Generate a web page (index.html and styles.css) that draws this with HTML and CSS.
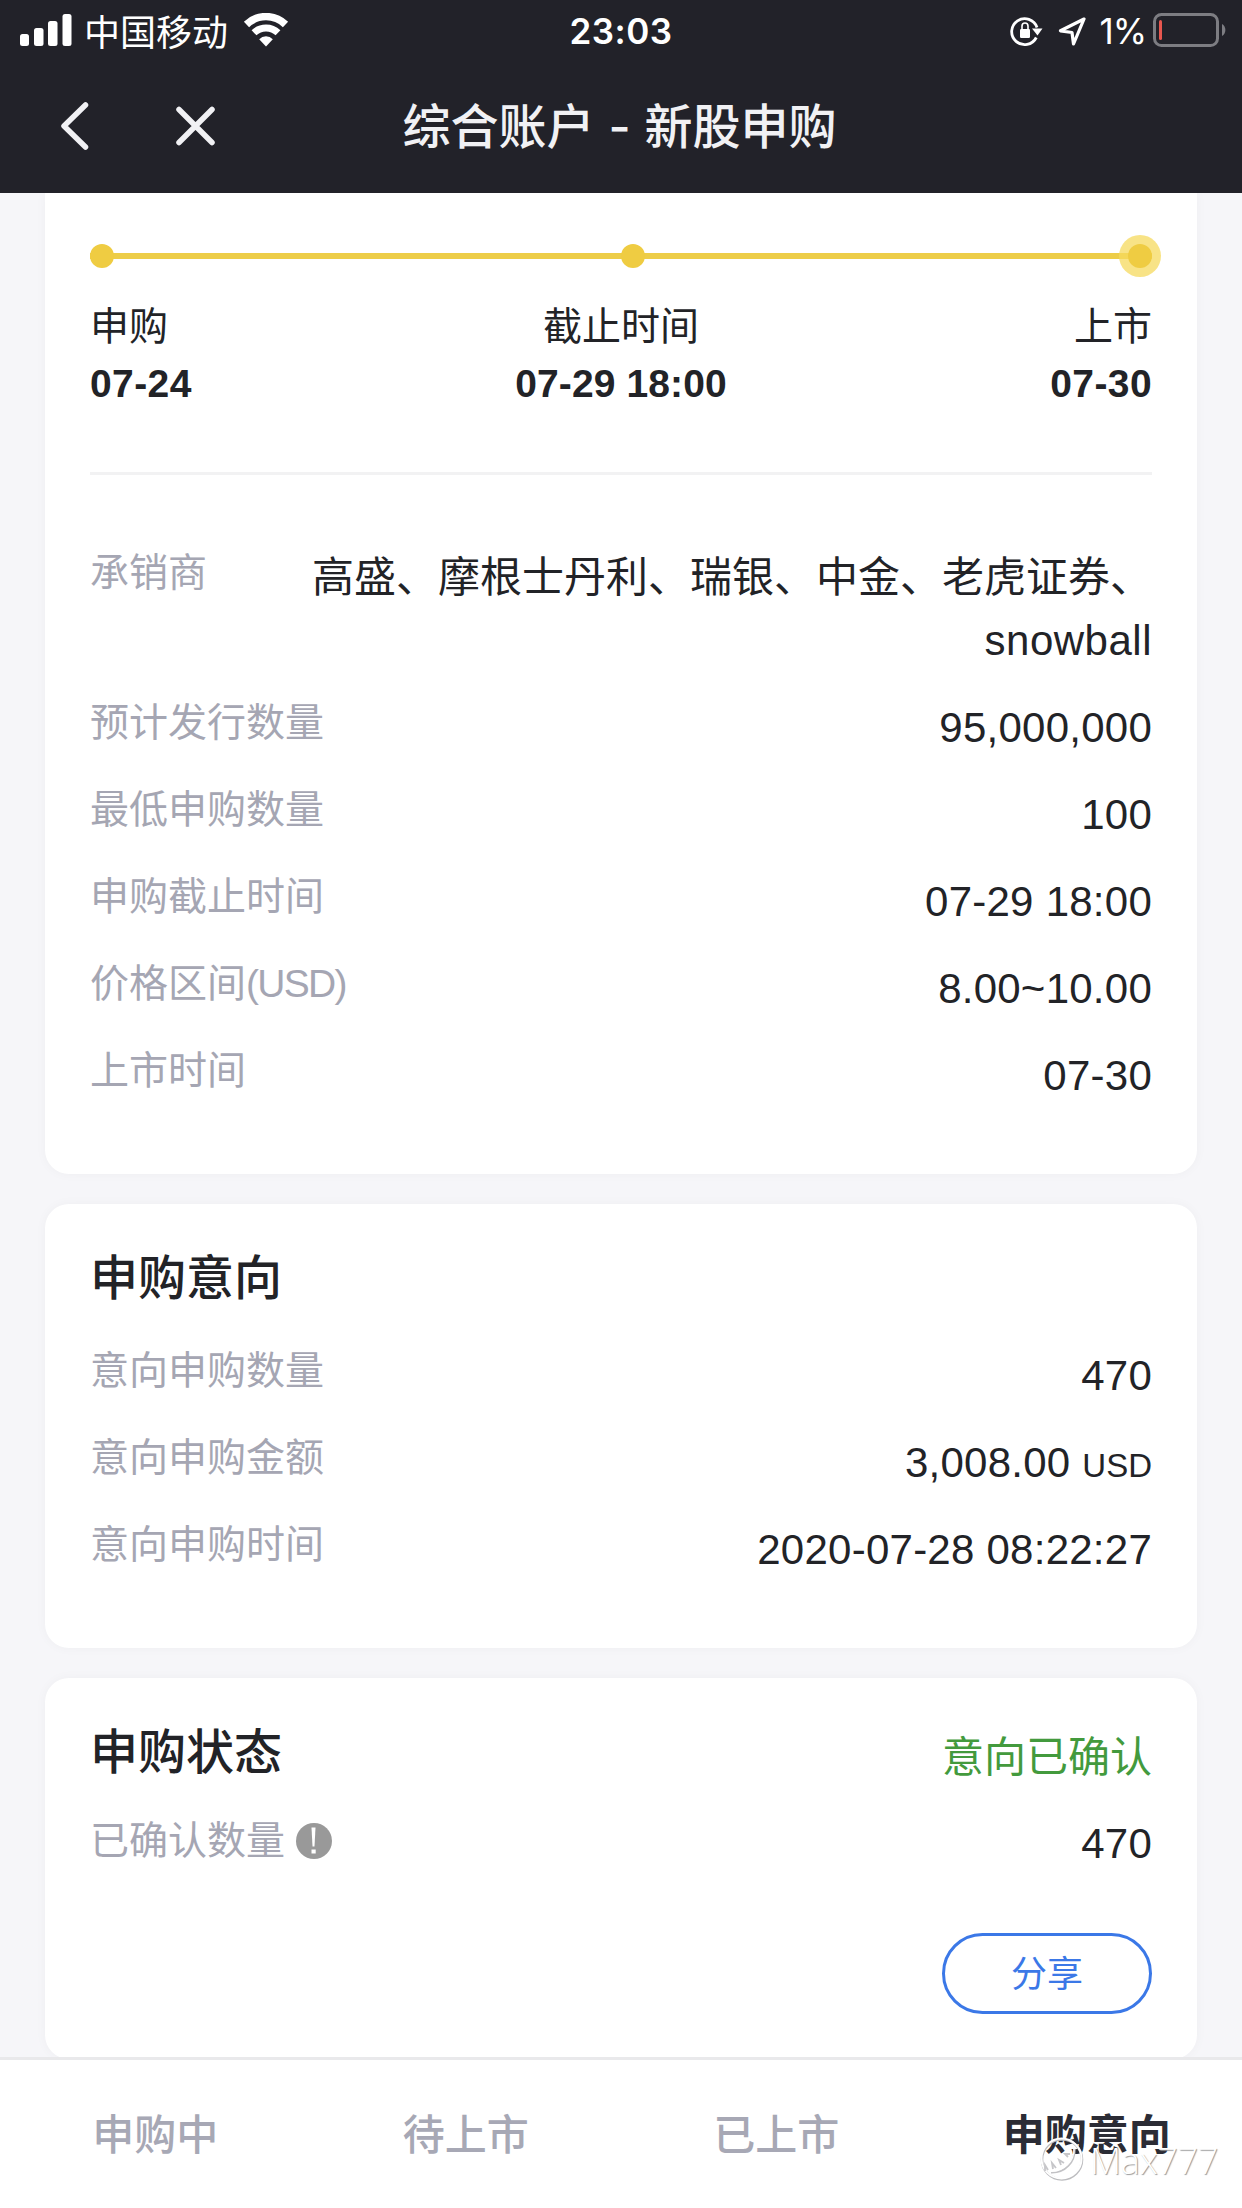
FILE: index.html
```html
<!DOCTYPE html>
<html lang="zh-CN">
<head>
<meta charset="utf-8">
<title>综合账户 - 新股申购</title>
<link rel="stylesheet" href="styles.css">
</head>
<body>
<div class="screen">
  <header class="header">
    <div class="status">
      <div class="status-left">
        <svg class="signal" width="52" height="32" viewBox="0 0 52 32" fill="#fff"><rect x="0" y="20" width="9" height="12" rx="2.5"/><rect x="14" y="14" width="9.500" height="18" rx="2.500"/><rect x="28" y="7" width="9.500" height="25" rx="2.500"/><rect x="42.500" y="0" width="9" height="32" rx="2.500"/></svg>
        <span class="carrier">中国移动</span>
        <svg class="wifi" width="46" height="34" viewBox="0 0 46 34"><path d="M3.500 11.500a28 28 0 0 1 39 0" fill="none" stroke="#fff" stroke-width="7.500"/><path d="M11 19.800a17.500 17.500 0 0 1 24 0" fill="none" stroke="#fff" stroke-width="7"/><path d="M23 33.500l-6.800-7.300a9.500 9.500 0 0 1 13.600 0z" fill="#fff"/></svg>
      </div>
      <div class="clock">23:03</div>
      <div class="status-right">
        <svg class="lock" width="33" height="32" viewBox="0 0 33 32"><path d="M26.300 22.500A13 13 0 1 1 27 12.500" fill="none" stroke="#fff" stroke-width="2.800"/><path d="M22 13.500h10.500l-5 7z" fill="#fff"/><rect x="10" y="14" width="10" height="9" rx="1.200" fill="#fff"/><path d="M12 15v-4a3 3 0 0 1 6 0v4" fill="none" stroke="#fff" stroke-width="1.600"/></svg>
        <svg class="nav-arrow" width="28" height="30" viewBox="0 0 28 30"><path d="M26 3 2.500 14.800l11.500 1.700 1.500 11.500z" fill="none" stroke="#fff" stroke-width="3.200" stroke-linejoin="round"/></svg>
        <span class="percent">1%</span>
        <svg class="battery" width="74" height="34" viewBox="0 0 74 34"><rect x="1.500" y="1.500" width="63" height="31" rx="7" fill="none" stroke="#7d7d82" stroke-width="3"/><rect x="6" y="7" width="3" height="20" rx="1.500" fill="#e8574f"/><path d="M69 11a7 7 0 0 1 0 12z" fill="#7d7d82"/></svg>
      </div>
    </div>
    <div class="titlebar">
      <div class="nav-buttons">
        <svg class="back" width="29" height="54" viewBox="0 0 29 54"><path d="M25.500 6 4 27l21.500 21" fill="none" stroke="#f1f1f4" stroke-width="5.500" stroke-linecap="round" stroke-linejoin="round"/></svg>
        <svg class="close" width="39" height="40" viewBox="0 0 39 40"><path d="M3 3.500 36 36.500M36 3.500 3 36.500" fill="none" stroke="#f1f1f4" stroke-width="5.500" stroke-linecap="round"/></svg>
      </div>
      <h1 class="title">综合账户 <span class="dash">-</span> 新股申购</h1>
    </div>
  </header>

  <main class="content">
    <section class="card card-detail">
      <div class="timeline"><i class="dot"></i><i class="dot dot-mid"></i><i class="dot dot-end"></i></div>
      <div class="stages">
        <div class="stage"><span>申购</span><b>07-24</b></div>
        <div class="stage stage-mid"><span>截止时间</span><b>07-29 18:00</b></div>
        <div class="stage stage-end"><span>上市</span><b>07-30</b></div>
      </div>
      <dl class="rows">
        <div class="row"><dt>承销商</dt><dd class="names">高盛、摩根士丹利、瑞银、中金、老虎证券、<br><span class="latin">snowball</span></dd></div>
        <div class="row"><dt>预计发行数量</dt><dd>95,000,000</dd></div>
        <div class="row"><dt>最低申购数量</dt><dd>100</dd></div>
        <div class="row"><dt>申购截止时间</dt><dd>07-29 18:00</dd></div>
        <div class="row"><dt>价格区间<span class="unit">(USD)</span></dt><dd>8.00~10.00</dd></div>
        <div class="row"><dt>上市时间</dt><dd>07-30</dd></div>
      </dl>
    </section>

    <section class="card card-intent">
      <h2 class="heading">申购意向</h2>
      <dl class="rows">
        <div class="row"><dt>意向申购数量</dt><dd>470</dd></div>
        <div class="row"><dt>意向申购金额</dt><dd>3,008.00 <small>USD</small></dd></div>
        <div class="row"><dt>意向申购时间</dt><dd>2020-07-28 08:22:27</dd></div>
      </dl>
    </section>

    <section class="card card-state">
      <div class="state-head"><h2 class="heading">申购状态</h2><span class="confirmed">意向已确认</span></div>
      <dl class="rows">
        <div class="row"><dt>已确认数量<svg class="info" width="36" height="36" viewBox="0 0 36 36"><circle cx="18" cy="18" r="18" fill="#999"/><path d="M15.500 4.500h4l-1 19h-2z" fill="#fff"/><rect x="15.500" y="26.500" width="4.200" height="4" fill="#fff"/></svg></dt><dd>470</dd></div>
      </dl>
      <button class="share" type="button">分享</button>
    </section>
  </main>

  <nav class="tabs">
    <a class="tab">申购中</a>
    <a class="tab">待上市</a>
    <a class="tab">已上市</a>
    <a class="tab tab-active">申购意向</a>
  </nav>

  <div class="watermark">
    <svg width="44" height="44" viewBox="0 0 44 44" fill="none"><circle cx="22" cy="22.500" r="20" stroke="#bcbcbf" stroke-width="2.600"/><circle cx="21.500" cy="21.500" r="20" stroke="#fff" stroke-width="2"/><path d="M34.500 12C35 25 25 36 11 35.500" stroke="#c2c2c5" stroke-width="2.200"/><path d="M34 11.500C34.500 24 24 35 10.500 34.500" stroke="#fff" stroke-width="1.200"/><path d="M5 34v-6l3 5M13 32l-1-6 4 5M21 28l-2-5 5 3M28 20l-3-3 5 0" stroke="#c6c6c9" stroke-width="1.800"/></svg>
    <span>Max777</span>
  </div>
</div>
</body>
</html>
```
FILE: styles.css
```css
* { box-sizing: border-box; }
body {
  margin: 0;
  background: #f6f6f9;
  color: #222327;
  font-family: "Liberation Sans", "Noto Sans CJK SC", sans-serif;
}
h1, h2, dl, dd { margin: 0; }
svg { display: block; flex: none; }

.screen {
  position: relative;
  width: 1242px;
  height: 2208px;
  display: flex;
  flex-direction: column;
  overflow: hidden;
}

/* status bar and title */
.header { flex: none; height: 193px; background: #222229; color: #fff; }
.status {
  height: 60px;
  padding: 0 15px 0 20px;
  display: grid;
  grid-template-columns: 1fr auto 1fr;
  align-items: center;
}
.status-left, .status-right { display: flex; align-items: center; }
.status-right { justify-content: flex-end; }
.carrier { margin-left: 12px; font-size: 36px; line-height: 60px; font-family: "Noto Sans CJK SC", sans-serif; }
.wifi { margin: 0 0 1px 15px; }
.clock { margin-right: 5px; padding-top: 2px; font: 600 35px/58px Inter, sans-serif; letter-spacing: 0.5px; }
.lock { margin-top: 2px; }
.nav-arrow { margin: 2px 0 0 15px; }
.percent { margin-left: 13px; padding-top: 2px; font: 400 35px/58px Inter, sans-serif; letter-spacing: -1px; }
.battery { margin-left: 7px; }
.titlebar {
  height: 131px;
  padding: 0 61px 0 60px;
  display: grid;
  grid-template-columns: 1fr auto 1fr;
  align-items: center;
}
.nav-buttons { display: flex; align-items: center; gap: 87px; }
.title {
  padding: 0 2px 2px 0;
  font: 500 48px/72px "Noto Sans CJK SC", sans-serif;
  word-spacing: 3px;
  color: #f1f1f4;
}
.dash { font-family: Inter, sans-serif; }

/* cards */
.content {
  flex: 1;
  min-height: 0;
  padding: 0 45px;
  display: flex;
  flex-direction: column;
  gap: 30px;
  overflow: hidden;
}
.card {
  flex: none;
  padding: 0 45px;
  border-radius: 24px;
  background: #fff;
  box-shadow: 0 0 12px rgba(30, 30, 60, 0.035);
}
.card-detail { height: 981px; padding-top: 60px; border-radius: 0 0 24px 24px; }
.card-intent { height: 444px; padding-top: 34px; }
.card-state { height: 381px; padding-top: 34px; }

.timeline {
  height: 6px;
  display: flex;
  align-items: center;
  background: #edcd48;
}
.dot { flex: none; width: 24px; height: 24px; border-radius: 50%; background: #efcc42; }
.dot-mid { margin-left: 507px; }
.dot-end { margin-left: auto; box-shadow: 0 0 0 9px rgba(246, 218, 94, 0.75); }
.stages {
  height: 216px;
  padding-top: 39px;
  display: grid;
  grid-template-columns: 1fr auto 1fr;
  border-bottom: 3px solid #f2f2f3;
  font-size: 39px;
}
.stage { display: flex; flex-direction: column; line-height: 57px; }
.stage b { letter-spacing: 0.4px; }
.stage-mid { text-align: center; }
.stage-mid b { letter-spacing: 0.1px; }
.stage-end { text-align: right; }

.rows { display: flex; flex-direction: column; gap: 24px; }
.card-detail .rows { margin-top: 71px; }
.row { display: flex; justify-content: space-between; }
.row dt {
  height: 54px;
  display: flex;
  align-items: center;
  font-size: 39px;
  line-height: 54px;
  color: #a5a6b3;
}
.row dd { font-size: 42px; line-height: 63px; text-align: right; letter-spacing: 0.25px; }
.row .names { letter-spacing: 0; }
.latin { letter-spacing: 0.5px; }
.unit { letter-spacing: -1.7px; }
.row small { font-size: 33px; line-height: 1; letter-spacing: 0; }
.info { margin-left: 11px; }
.heading { font: 500 48px/72px "Noto Sans CJK SC", sans-serif; }
.card-intent .rows { margin-top: 34px; }
.state-head { display: flex; justify-content: space-between; align-items: flex-start; }
.confirmed { margin-top: 15px; font-size: 42px; line-height: 61px; color: #439a3d; }
.card-state .rows { margin-top: 24px; }
.card-state .row dt { height: 56px; padding-top: 1px; }
.share {
  display: block;
  width: 210px;
  height: 81px;
  margin: 58px 0 0 auto;
  padding: 0 0 4px;
  border: 3px solid #3b78e7;
  border-radius: 41px;
  background: none;
  color: #3b78e7;
  font: 400 36px/71px "Noto Sans CJK SC", sans-serif;
}

/* bottom tabs */
.tabs {
  flex: none;
  height: 151px;
  display: grid;
  grid-template-columns: repeat(4, 1fr);
  border-top: 3px solid #e9e9eb;
  background: #fff;
}
.tab {
  text-align: center;
  font: 500 42px/143px "Noto Sans CJK SC", sans-serif;
  color: #a7a8b5;
}
.tab-active { font-weight: 700; color: #2b2c35; }

.watermark {
  position: absolute;
  right: 24px;
  bottom: 25px;
  display: flex;
  align-items: center;
  gap: 6px;
  font: 300 36px/44px "Open Sans", sans-serif;
  color: #fff;
  text-shadow: 1px 1px 1px #999;
}
.watermark span { padding-top: 5px; letter-spacing: -0.3px; }
```
